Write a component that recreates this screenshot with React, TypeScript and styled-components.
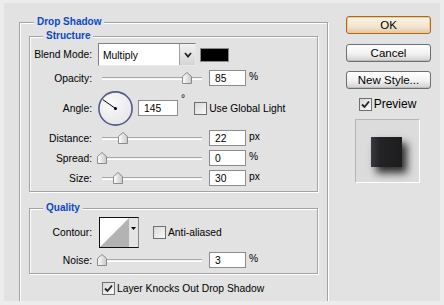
import React from 'react';
import styled, { createGlobalStyle } from 'styled-components';

const GlobalStyle = createGlobalStyle`
  body {
    margin: 0;
    background: #ececec;
    font-family: "Liberation Sans", Arial, sans-serif;
  }
`;

const Window = styled.div`
  width: 444px;
  height: 305px;
  background: #ececec;
  padding: 3px 4px 4px 4px;
  box-sizing: border-box;
`;

const Panel = styled.div`
  width: 436px;
  height: 298px;
  background: #e2e2e2;
  display: flex;
  overflow: hidden;
`;

const GroupBox = styled.div<{ w: number; pt: number; pb: number; pl: number; mt?: number; h?: number }>`
  position: relative;
  box-sizing: border-box;
  width: ${p => p.w}px;
  ${p => (p.h ? `height: ${p.h}px;` : '')}
  margin-top: ${p => p.mt || 0}px;
  padding: ${p => p.pt}px 0 ${p => p.pb}px ${p => p.pl}px;
  border: 1px solid #a3a3a3;
  box-shadow: inset 1px 1px 0 #fff, 1px 1px 0 #fff;
  display: flex;
  flex-direction: column;
  flex-shrink: 0;
`;

const Legend = styled.span<{ left: number }>`
  position: absolute;
  top: -7px;
  left: ${p => p.left}px;
  padding: 0 3px;
  background: #e2e2e2;
  color: #0c48c6;
  font-weight: bold;
  font-size: 10px;
  line-height: 12px;
`;

const Rows = styled.div`
  display: flex;
  flex-direction: column;
  gap: 4px;
`;

const Row = styled.div<{ h: number }>`
  display: flex;
  align-items: center;
  height: ${p => p.h}px;
`;

const Label = styled.span`
  width: 62px;
  margin-right: 6px;
  flex-shrink: 0;
  text-align: right;
  font-size: 10.3px;
  color: #000;
  white-space: nowrap;
`;

const Text = styled.span<{ ml?: number }>`
  margin-left: ${p => p.ml || 0}px;
  font-size: 10.3px;
  color: #000;
  white-space: nowrap;
`;

const Unit = styled.span<{ top?: boolean }>`
  margin-left: 3px;
  font-size: 10.3px;
  line-height: 12px;
  color: #000;
  align-self: ${p => (p.top ? 'flex-start' : 'center')};
  margin-top: ${p => (p.top ? '3px' : '-2px')};
`;

const Select = styled.div`
  display: flex;
  width: 98px;
  height: 23px;
  box-sizing: border-box;
  border: 1px solid #7f7f7f;
  border-right-color: #e8e8e8;
  border-bottom-color: #e8e8e8;
  background: #fff;
`;

const SelectValue = styled.span`
  flex: 1;
  padding: 6px 0 0 4px;
  font-size: 10.3px;
  color: #000;
`;

const SelectButton = styled.div`
  width: 15px;
  background: linear-gradient(#f2f2f2, #d4d4d4);
  border-left: 1px solid #a0a0a0;
  display: flex;
  align-items: center;
  justify-content: center;
`;

const Swatch = styled.div`
  width: 29px;
  height: 14px;
  margin-left: 4px;
  box-sizing: border-box;
  border: 1px solid #8a8a8a;
  background: #000;
`;

const SliderBox = styled.div`
  position: relative;
  width: 108px;
  height: 16px;
  flex-shrink: 0;
`;

const Track = styled.div`
  position: absolute;
  left: 4px;
  right: 4px;
  top: 7px;
  height: 3px;
  box-sizing: border-box;
  border-top: 1px solid #a8a8a8;
  border-bottom: 1px solid #fff;
  background: #f4f4ee;
`;

const Thumb = styled.svg`
  position: absolute;
  top: 2px;
  margin-left: -5px;
`;

const NumberField = styled.div<{ w?: number; ml?: number }>`
  width: ${p => p.w || 37}px;
  height: 16px;
  margin-left: ${p => p.ml ?? 3}px;
  flex-shrink: 0;
  box-sizing: border-box;
  border: 1px solid #8c8c8c;
  background: #fff;
  padding: 2px 0 0 5px;
  font-size: 10.3px;
  color: #000;
`;

const CheckBox = styled.div<{ ml?: number }>`
  width: 13px;
  height: 13px;
  margin-left: ${p => p.ml || 0}px;
  box-sizing: border-box;
  border: 1px solid #6f6f6f;
  background: linear-gradient(135deg, #d8d8d8, #fafafa);
  display: flex;
  align-items: center;
  justify-content: center;
  flex-shrink: 0;
`;

const ContourBox = styled.div`
  display: flex;
  width: 40px;
  height: 31px;
  margin-left: 1px;
  box-sizing: border-box;
  border: 1px solid #111;
  border-right-color: #8a8a8a;
`;

const ContourCurve = styled.svg`
  display: block;
`;

const ContourArrow = styled.div`
  flex: 1;
  background: #e4e4e4;
  display: flex;
  justify-content: center;
  padding-top: 9px;
`;

const FooterRow = styled.div`
  display: flex;
  align-items: center;
  margin: 8px 0 0 73px;
`;

const Side = styled.div`
  width: 85px;
  margin: 13px 0 0 18px;
  display: flex;
  flex-direction: column;
  align-items: center;
`;

const Button = styled.div<{ primary?: boolean; mt?: number }>`
  width: 85px;
  height: 18px;
  margin-top: ${p => p.mt || 0}px;
  box-sizing: border-box;
  border: 1px solid ${p => (p.primary ? '#a8692e' : '#6e6e6e')};
  border-radius: 3px;
  background: ${p =>
    p.primary
      ? 'linear-gradient(#fdf3e3, #f2e6d2 60%, #e2c89c)'
      : 'linear-gradient(#ffffff, #f2f2f2 55%, #cfcfcf)'};
  box-shadow: ${p => (p.primary ? 'inset 0 0 0 1px #f6c98a' : 'inset 0 -1px 0 #bdbdbd')};
  font-size: 11.5px;
  line-height: 16px;
  text-align: center;
  color: #000;
`;

const PreviewToggle = styled.div`
  display: flex;
  align-items: center;
  margin-top: 8px;
  margin-left: -2px;
`;

const PreviewLabel = styled.span`
  margin-left: 2px;
  font-size: 12px;
  color: #000;
`;

const PreviewBox = styled.div`
  width: 65px;
  height: 64px;
  margin-top: 8px;
  margin-left: -2px;
  box-sizing: border-box;
  border: 1px solid #b6b6b6;
  border-right-color: #fff;
  border-bottom-color: #fff;
  background: #dcdcdc;
  display: flex;
  padding: 17px 0 0 15px;
`;

const PreviewSquare = styled.div`
  width: 31px;
  height: 30px;
  background: linear-gradient(90deg, #3a3a3e, #232326 30%, #1d1d20);
  box-shadow: 5px 6px 8px rgba(0, 0, 0, 0.8);
`;

const CheckMark = () => (
  <svg width="9" height="9" viewBox="0 0 9 9">
    <path d="M1 4.5 L3.5 7 L8 1.5" fill="none" stroke="#222" strokeWidth="1.8" />
  </svg>
);

const Slider = ({ value }: { value: number }) => (
  <SliderBox>
    <Track />
    <Thumb width="10" height="12" viewBox="0 0 10 12" style={{ left: 4 + value * 100 }}>
      <defs>
        <linearGradient id="thumbFill" x1="0" y1="0" x2="1" y2="0">
          <stop offset="0" stopColor="#ffffff" />
          <stop offset="1" stopColor="#c8c8c8" />
        </linearGradient>
      </defs>
      <path d="M0.5 4.5 L5 0.5 L9.5 4.5 L9.5 11.5 L0.5 11.5 Z" fill="url(#thumbFill)" stroke="#8a8a8a" />
    </Thumb>
  </SliderBox>
);

const AngleDial = ({ angle }: { angle: number }) => {
  const r = (angle * Math.PI) / 180;
  const x = 17.5 + Math.cos(r) * 15.5;
  const y = 17.5 - Math.sin(r) * 15.5;
  return (
    <svg width="35" height="35" viewBox="0 0 35 35" style={{ flexShrink: 0 }}>
      <defs>
        <radialGradient id="dialFill" cx="0.4" cy="0.35" r="0.7">
          <stop offset="0" stopColor="#fafafa" />
          <stop offset="1" stopColor="#e6e6ea" />
        </radialGradient>
      </defs>
      <circle cx="17.5" cy="17.5" r="16.6" fill="url(#dialFill)" stroke="#56598a" strokeWidth="1.6" />
      <line x1="17.5" y1="17.5" x2={x} y2={y} stroke="#000" strokeWidth="1" />
      <circle cx="17.5" cy="17.5" r="1.5" fill="#000" />
    </svg>
  );
};

const SliderRow = ({ label, value, pos, unit }: { label: string; value: string; pos: number; unit: string }) => (
  <Row h={16}>
    <Label>{label}</Label>
    <Slider value={pos} />
    <NumberField>{value}</NumberField>
    <Unit>{unit}</Unit>
  </Row>
);

const App: React.FC = () => (
  <>
    <GlobalStyle />
    <Window>
      <Panel>
        <GroupBox w={309} pt={13} pb={0} pl={9} mt={19} h={300} style={{ marginLeft: 15 }}>
          <Legend left={14}>Drop Shadow</Legend>

          <GroupBox w={289} pt={6} pb={5} pl={0}>
            <Legend left={13}>Structure</Legend>
            <Rows>
              <Row h={23}>
                <Label>Blend Mode:</Label>
                <Select>
                  <SelectValue>Multiply</SelectValue>
                  <SelectButton>
                    <svg width="8" height="6" viewBox="0 0 8 6">
                      <path d="M1 1 L4 4.5 L7 1" fill="none" stroke="#222" strokeWidth="1.8" />
                    </svg>
                  </SelectButton>
                </Select>
                <Swatch />
              </Row>
              <SliderRow label="Opacity:" value="85" pos={0.85} unit="%" />
              <Row h={36}>
                <Label>Angle:</Label>
                <AngleDial angle={145} />
                <NumberField w={40} ml={5}>145</NumberField>
                <Unit top>°</Unit>
                <CheckBox ml={9} />
                <Text ml={2}>Use Global Light</Text>
              </Row>
              <SliderRow label="Distance:" value="22" pos={0.21} unit="px" />
              <SliderRow label="Spread:" value="0" pos={0} unit="%" />
              <SliderRow label="Size:" value="30" pos={0.16} unit="px" />
            </Rows>
          </GroupBox>

          <GroupBox w={289} pt={8} pb={5} pl={0} mt={16}>
            <Legend left={13}>Quality</Legend>
            <Rows>
              <Row h={31}>
                <Label>Contour:</Label>
                <ContourBox>
                  <ContourCurve width="29" height="29" viewBox="0 0 29 29">
                    <rect width="29" height="29" fill="#fff" />
                    <path d="M0 29 L29 0 L29 29 Z" fill="#b3b3b3" />
                  </ContourCurve>
                  <ContourArrow>
                    <svg width="5" height="3" viewBox="0 0 5 3">
                      <path d="M0 0 L5 0 L2.5 3 Z" fill="#000" />
                    </svg>
                  </ContourArrow>
                </ContourBox>
                <CheckBox ml={14} />
                <Text ml={2}>Anti-aliased</Text>
              </Row>
              <SliderRow label="Noise:" value="3" pos={0} unit="%" />
            </Rows>
          </GroupBox>

          <FooterRow>
            <CheckBox>
              <CheckMark />
            </CheckBox>
            <Text ml={2}>Layer Knocks Out Drop Shadow</Text>
          </FooterRow>
        </GroupBox>

        <Side>
          <Button primary>OK</Button>
          <Button mt={10}>Cancel</Button>
          <Button mt={9}>New Style...</Button>
          <PreviewToggle>
            <CheckBox>
              <CheckMark />
            </CheckBox>
            <PreviewLabel>Preview</PreviewLabel>
          </PreviewToggle>
          <PreviewBox>
            <PreviewSquare />
          </PreviewBox>
        </Side>
      </Panel>
    </Window>
  </>
);

export default App;
